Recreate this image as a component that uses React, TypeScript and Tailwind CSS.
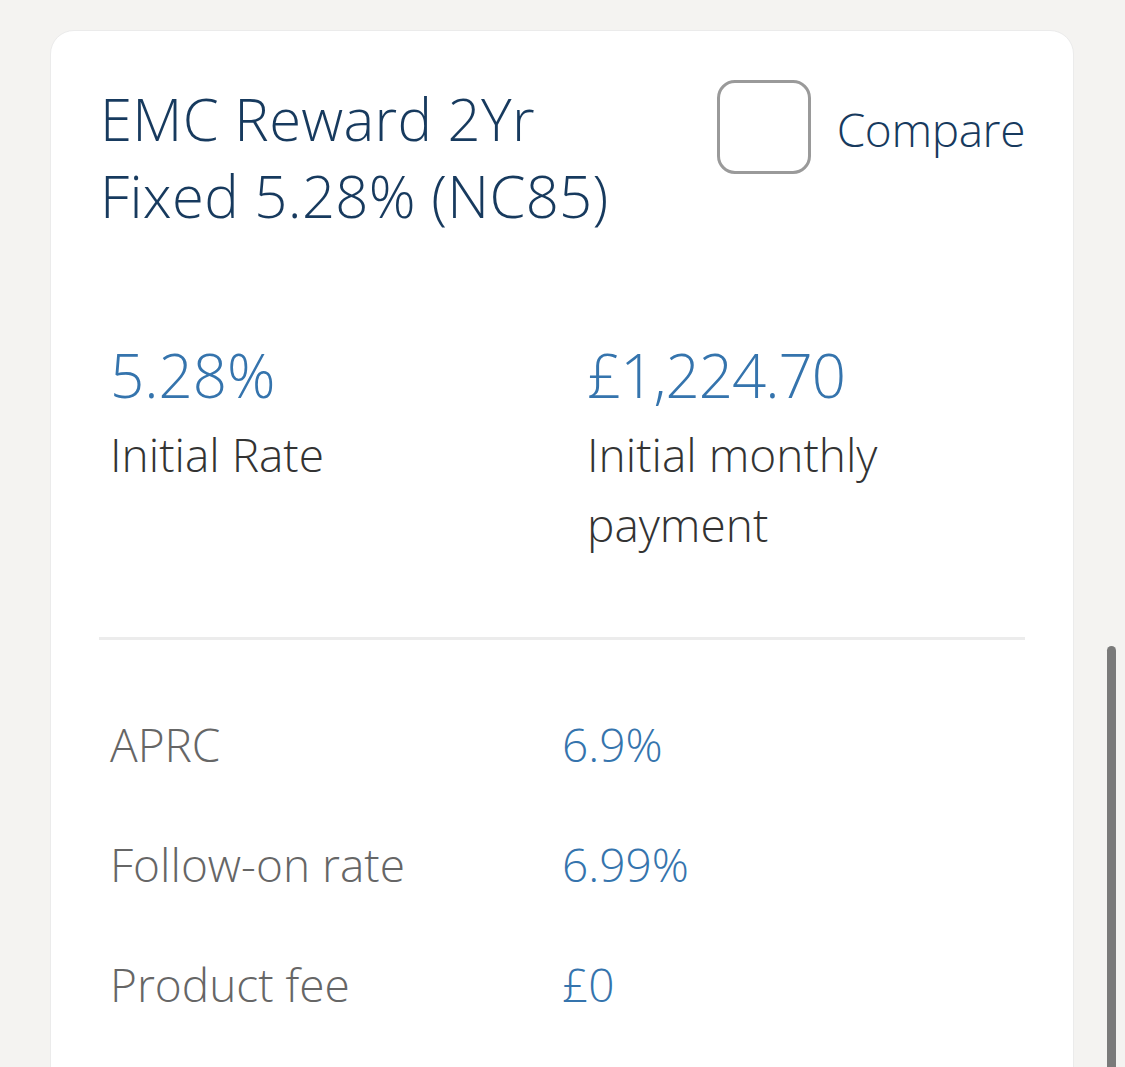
import { FC } from 'react'

const rows = [
  { label: 'APRC', value: '6.9%' },
  { label: 'Follow-on rate', value: '6.99%' },
  { label: 'Product fee', value: '£0' },
]

const App: FC = () => {
  return (
    <div
      className="relative h-[1067px] overflow-hidden bg-[#f4f3f1] pt-[30px] pl-[50px] pr-[51px] font-light"
      style={{ fontFamily: '"Open Sans", "Noto Sans", sans-serif' }}
    >
      <div className="h-[1100px] rounded-[24px] border border-[#ebebeb] bg-white">
        {/* header */}
        <div className="flex justify-between pt-[49px] pl-[49px] pr-[48px]">
          <h1 className="text-[58px] leading-[77px] font-light tracking-[0.3px] text-[#173a5e]">
            EMC Reward 2Yr
            <br />
            Fixed 5.28% (NC85)
          </h1>
          <label className="flex items-start gap-[26px]">
            <span className="block h-[94px] w-[94px] rounded-[18px] border-[3px] border-[#9a9a9a]" />
            <span className="mt-[14px] text-[46px] leading-[70px] tracking-[-0.4px] text-[#173a5e]">Compare</span>
          </label>
        </div>

        {/* headline figures */}
        <div className="mt-[97px] grid grid-cols-[477px_1fr] pl-[59px]">
          <div>
            <div className="text-[60px] leading-[88px] text-[#3574ad]">5.28%</div>
            <div className="text-[46px] leading-[70px] text-[#333333]">Initial Rate</div>
          </div>
          <div>
            <div className="text-[60px] leading-[88px] tracking-[-1px] text-[#3574ad]">£1,224.70</div>
            <div className="text-[46px] leading-[70px] text-[#333333]">
              Initial monthly
              <br />
              payment
            </div>
          </div>
        </div>

        <div className="mx-[48px] mt-[78px] h-[3px] bg-[#ececec]" />

        {/* details */}
        <div className="mt-[69px] flex flex-col gap-[50px] pl-[59px]">
          {rows.map((r) => (
            <div key={r.label} className="grid grid-cols-[452px_1fr] text-[46px] leading-[70px]">
              <span className="text-[#666666]">{r.label}</span>
              <span className="text-[#3574ad]">{r.value}</span>
            </div>
          ))}
        </div>
      </div>

      {/* overlay scrollbar */}
      <div className="absolute right-[9px] top-[646px] bottom-0 w-[9px] rounded-t-full bg-[#7a7a7a]" />
    </div>
  )
}

export default App
